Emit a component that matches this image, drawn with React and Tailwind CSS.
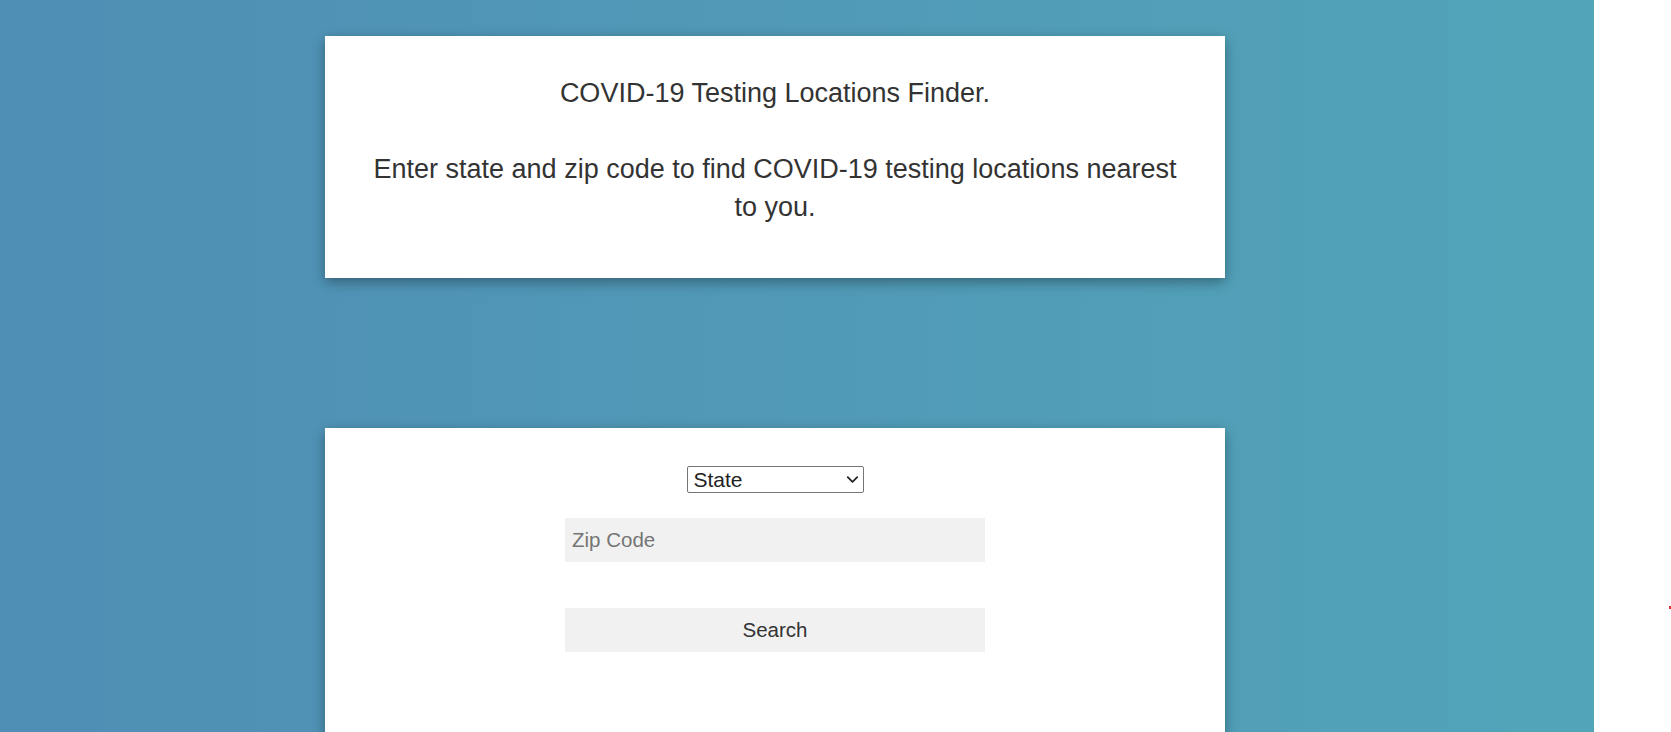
import { ChevronDown } from 'lucide-react'

export default function App() {
  return (
    <div className="flex h-[732px] w-full overflow-hidden bg-white font-['Liberation_Sans',Arial,sans-serif] text-[#333]">
      {/* Blue panel */}
      <div className="w-[1594px] shrink-0 bg-gradient-to-r from-[#4f8eb5] to-[#52a5b9] pl-[325px] pt-[36px]">
        {/* Intro card */}
        <div className="w-[900px] bg-white px-[38px] pt-[38px] pb-[52px] text-center text-[27px] leading-[38px] shadow-[0_4px_12px_rgba(0,0,0,0.35)]">
          <p>COVID-19 Testing Locations Finder.</p>
          <p>&nbsp;</p>
          <p>Enter state and zip code to find COVID-19 testing locations nearest to you.</p>
        </div>

        {/* Search card */}
        <div className="mt-[150px] flex h-[400px] w-[900px] flex-col items-center bg-white pt-[38px] shadow-[0_4px_12px_rgba(0,0,0,0.35)]">
          <div className="relative h-[27px] w-[177px]">
            <select
              defaultValue="state"
              className="h-full w-full appearance-none rounded-[2px] border border-[#767676] bg-white pl-[6px] text-[21px] leading-none text-[#222] outline-none"
            >
              <option value="state">State</option>
            </select>
            <ChevronDown
              className="pointer-events-none absolute right-[2px] top-[4px] h-[19px] w-[19px] text-[#222]"
              strokeWidth={2.2}
            />
          </div>

          <input
            type="text"
            placeholder="Zip Code"
            className="mt-[25px] h-[44px] w-[420px] bg-[#f1f1f1] px-[7px] text-[20.5px] text-[#333] outline-none placeholder:text-[#757575]"
          />

          <button className="mt-[46px] h-[44px] w-[420px] bg-[#f1f1f1] text-[20.5px] text-[#333]">
            Search
          </button>
        </div>
      </div>

      {/* White strip */}
      <div className="flex flex-1 justify-end pt-[606px]">
        <div className="h-[3px] w-[2px] bg-[#e03030]" />
      </div>
    </div>
  )
}
